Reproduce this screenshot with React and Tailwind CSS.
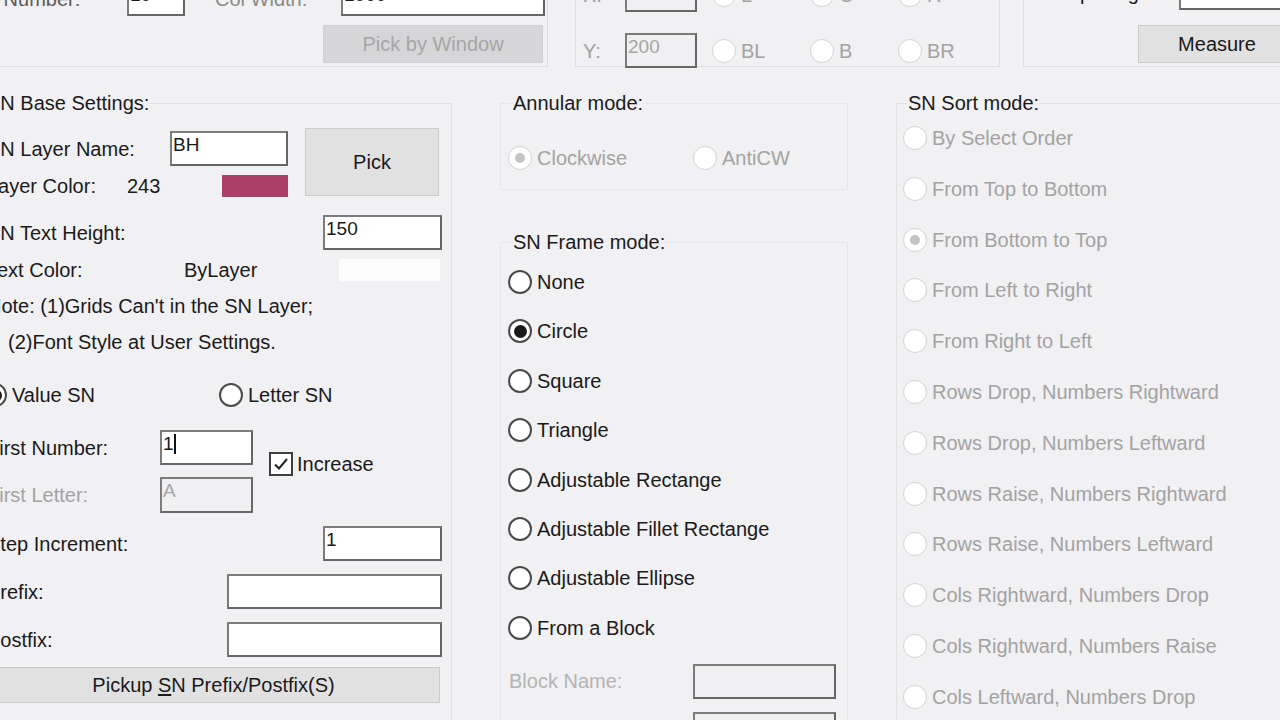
import React from "react";

const TXT = "text-[#1a1a1a]";
const DIS = "text-[#a3a3a3]";

function Input({ w, h = 35, value = "", disabled = false, caret = false, className = "" }) {
  return (
    <div
      className={`shrink-0 border-2 border-t-[#7c7c7c] border-l-[#7c7c7c] border-b-[#666] border-r-[#666] ${
        disabled ? "bg-[#f0eff1] text-[#a5a5a5]" : "bg-white text-[#1a1a1a]"
      } pl-[1px] pt-[1px] text-[19px] leading-[22px] flex items-start ${className}`}
      style={{ width: w, height: h }}
    >
      <span>{value}</span>
      {caret && <span className="w-[2px] h-[20px] bg-[#111] mt-[1px]" />}
    </div>
  );
}

function Radio({ checked = false, disabled = false, label, className = "", textClass = "" }) {
  return (
    <div className={`flex items-center h-[24px] ${className}`}>
      <div
        className={`shrink-0 w-[24px] h-[24px] rounded-full bg-white flex items-center justify-center ${
          disabled ? "border border-[#d3d3d3]" : "border-2 border-[#4a4a4a]"
        }`}
      >
        {checked && (
          <div
            className={`rounded-full ${
              disabled ? "w-[10px] h-[10px] bg-[#c4c4c4]" : "w-[13px] h-[13px] bg-[#1a1a1a]"
            }`}
          />
        )}
      </div>
      <span className={`ml-[5px] whitespace-nowrap ${disabled ? DIS : TXT} ${textClass}`}>{label}</span>
    </div>
  );
}

function Btn({ w, h, children, disabled = false, className = "" }) {
  return (
    <div
      className={`shrink-0 flex items-center justify-center border ${
        disabled
          ? "bg-[#d6d5d8] border-[#d0cfd2] text-[#a6a6a6]"
          : "bg-[#e1e1e1] border-[#cbcbcb] text-[#1a1a1a]"
      } ${className}`}
      style={{ width: w, height: h }}
    >
      {children}
    </div>
  );
}

export default function App() {
  const frame = [
    ["None", false],
    ["Circle", true],
    ["Square", false],
    ["Triangle", false],
    ["Adjustable Rectange", false],
    ["Adjustable Fillet Rectange", false],
    ["Adjustable Ellipse", false],
    ["From a Block", false],
  ];
  const sort = [
    ["By Select Order", false],
    ["From Top to Bottom", false],
    ["From Bottom to Top", true],
    ["From Left to Right", false],
    ["From Right to Left", false],
    ["Rows Drop, Numbers Rightward", false],
    ["Rows Drop, Numbers Leftward", false],
    ["Rows Raise, Numbers Rightward", false],
    ["Rows Raise, Numbers Leftward", false],
    ["Cols Rightward, Numbers Drop", false],
    ["Cols Rightward, Numbers Raise", false],
    ["Cols Leftward, Numbers Drop", false],
  ];

  return (
    <div className="w-[1280px] h-[720px] overflow-hidden bg-[#f1f0f2] font-['Liberation_Sans',Arial,sans-serif] text-[20px] leading-[24px] text-[#1a1a1a] flex flex-col">
      {/* top strip */}
      <div className="h-[70px] shrink-0 flex items-start">
        {/* left group */}
        <div className="-mt-[40px] -ml-[60px] w-[608px] h-[107px] shrink-0 border-r border-b border-[#e0dee3] flex flex-col">
          <div className="mt-[21px] h-[35px] flex items-center">
            <span className="ml-[18px] w-[169px] text-[#5a5a5a] whitespace-nowrap">Row Number:</span>
            <Input w={58} value="10" />
            <span className="ml-[30px] w-[126px] text-[#8a8a8a] whitespace-nowrap">Col Width:</span>
            <Input w={204} value="1000" />
          </div>
          <div className="mt-[9px] flex">
            <Btn w={220} h={38} disabled className="ml-[383px]">
              Pick by Window
            </Btn>
          </div>
        </div>
        {/* middle group */}
        <div className="-mt-[40px] ml-[27px] w-[425px] h-[107px] shrink-0 border-l border-r border-b border-[#e0dee3] flex flex-col">
          <div className="mt-[17px] h-[35px] flex items-center">
            <span className="ml-[7px] w-[42px] text-[#a0a0a0]">X:</span>
            <Input w={72} value="200" disabled />
            <Radio disabled label="L" className="ml-[15px] w-[98px]" />
            <Radio disabled checked label="C" className="w-[88px]" />
            <Radio disabled label="R" />
          </div>
          <div className="mt-[21px] h-[35px] flex items-center">
            <span className="ml-[7px] w-[42px] text-[#a0a0a0]">Y:</span>
            <Input w={72} value="200" disabled />
            <Radio disabled label="BL" className="ml-[15px] w-[98px]" textClass="text-[#8f8f8f]" />
            <Radio disabled label="B" className="w-[88px]" textClass="text-[#8f8f8f]" />
            <Radio disabled label="BR" textClass="text-[#8f8f8f]" />
          </div>
        </div>
        {/* right group */}
        <div className="-mt-[40px] ml-[23px] w-[300px] h-[107px] shrink-0 border-l border-b border-[#e0dee3] flex flex-col">
          <div className="mt-[15px] h-[35px] flex items-center">
            <span className="ml-[7px] w-[148px] whitespace-nowrap">Col Spacing:</span>
            <Input w={120} value="" />
          </div>
          <div className="mt-[15px] flex">
            <Btn w={158} h={38} className="ml-[114px]">
              Measure
            </Btn>
          </div>
        </div>
      </div>

      {/* main */}
      <div className="flex items-start">
        {/* left column */}
        <fieldset className="mt-[21px] -ml-[20px] w-[472px] shrink-0 border border-[#e2e0e5] h-[700px]">
          <legend className="ml-[6px] px-0 leading-[24px] whitespace-nowrap">SN Base Settings:</legend>
          <div className="pl-[6px] flex flex-col">
            <div className="flex items-start">
              <div className="flex flex-col">
                <div className="mt-[16px] h-[35px] flex items-center">
                  <span className="w-[183px] whitespace-nowrap">SN Layer Name:</span>
                  <Input w={118} value="BH" />
                </div>
                <div className="mt-[8px] h-[24px] flex items-center">
                  <span className="w-[140px] whitespace-nowrap">Layer Color:</span>
                  <span className="w-[95px]">243</span>
                  <div className="w-[66px] h-[22px] bg-[#ab3f67]" />
                </div>
              </div>
              <Btn w={134} h={68} className="ml-[17px] mt-[13px]">
                Pick
              </Btn>
            </div>
            <div className="mt-[17px] h-[35px] flex items-center">
              <span className="w-[336px] whitespace-nowrap">SN Text Height:</span>
              <Input w={119} value="150" />
            </div>
            <div className="mt-[8px] h-[24px] flex items-center">
              <span className="w-[197px] whitespace-nowrap">Text Color:</span>
              <span className="w-[155px]">ByLayer</span>
              <div className="w-[101px] h-[22px] bg-[#fcfcfc]" />
            </div>
            <div className="mt-[12px] h-[24px] flex items-center whitespace-nowrap">
              Note: (1)Grids Can't in the SN Layer;
            </div>
            <div className="mt-[12px] h-[24px] flex items-center whitespace-nowrap">
              <span className="ml-[21px]">(2)Font Style at User Settings.</span>
            </div>
            <div className="mt-[29px] h-[24px] flex items-center">
              <Radio checked label="Value SN" className="-ml-[4px] w-[236px]" />
              <Radio label="Letter SN" />
            </div>
            <div className="flex items-start">
              <div className="flex flex-col">
                <div className="mt-[23px] h-[35px] flex items-center">
                  <span className="w-[173px] whitespace-nowrap">First Number:</span>
                  <Input w={93} value="1" caret />
                </div>
                <div className="mt-[12px] h-[36px] flex items-center">
                  <span className={`w-[173px] whitespace-nowrap ${DIS}`}>First Letter:</span>
                  <Input w={93} h={36} value="A" disabled />
                </div>
              </div>
              <div className="ml-[16px] mt-[45px] h-[24px] flex items-center">
                <div className="w-[24px] h-[24px] border-2 border-[#3f3f3f] bg-white flex items-center justify-center">
                  <svg width="18" height="18" viewBox="0 0 18 18">
                    <path d="M3 9.5 L7 13.5 L15 4" fill="none" stroke="#222" strokeWidth="2" />
                  </svg>
                </div>
                <span className="ml-[4px]">Increase</span>
              </div>
            </div>
            <div className="mt-[13px] h-[35px] flex items-center">
              <span className="w-[336px] whitespace-nowrap">Step Increment:</span>
              <Input w={119} value="1" />
            </div>
            <div className="mt-[13px] h-[35px] flex items-center">
              <span className="w-[240px] whitespace-nowrap">Prefix:</span>
              <Input w={215} />
            </div>
            <div className="mt-[13px] h-[35px] flex items-center">
              <span className="w-[240px] whitespace-nowrap">Postfix:</span>
              <Input w={215} />
            </div>
            <Btn w={453} h={36} className="mt-[10px]">
              <span>
                Pickup <span className="underline underline-offset-2">S</span>N Prefix/Postfix(S)
              </span>
            </Btn>
          </div>
        </fieldset>

        {/* middle column */}
        <div className="ml-[48px] w-[348px] shrink-0 flex flex-col">
          <fieldset className="mt-[21px] border border-[#e8e6ea] pl-[7px] pb-[19px]">
            <legend className="ml-[5px] px-0 leading-[24px] whitespace-nowrap">Annular mode:</legend>
            <div className="mt-[31px] flex items-center">
              <Radio disabled checked label="Clockwise" className="w-[185px]" />
              <Radio disabled label="AntiCW" />
            </div>
          </fieldset>
          <fieldset className="mt-[40px] border border-[#e8e6ea] pl-[7px] h-[520px]">
            <legend className="ml-[5px] px-0 leading-[24px] whitespace-nowrap">SN Frame mode:</legend>
            <div className="mt-[16px] flex flex-col gap-[25.4px]">
              {frame.map(([l, c]) => (
                <Radio key={l} checked={c} label={l} />
              ))}
            </div>
            <div className="mt-[24px] h-[35px] flex items-center">
              <span className="ml-[1px] w-[184px] text-[#b4b4b4] whitespace-nowrap">Block Name:</span>
              <Input w={143} disabled />
            </div>
            <div className="mt-[13px] flex">
              <Input w={143} disabled className="ml-[185px]" />
            </div>
          </fieldset>
        </div>

        {/* right column */}
        <fieldset className="mt-[21px] ml-[48px] w-[440px] shrink-0 border border-[#e2e0e5] pl-[6px] h-[700px]">
          <legend className="ml-[5px] px-0 leading-[24px] whitespace-nowrap">SN Sort mode:</legend>
          <div className="mt-[11px] flex flex-col gap-[26.8px]">
            {sort.map(([l, c]) => (
              <Radio key={l} disabled checked={c} label={l} textClass="text-[#9d9d9d]" />
            ))}
          </div>
        </fieldset>
      </div>
    </div>
  );
}
